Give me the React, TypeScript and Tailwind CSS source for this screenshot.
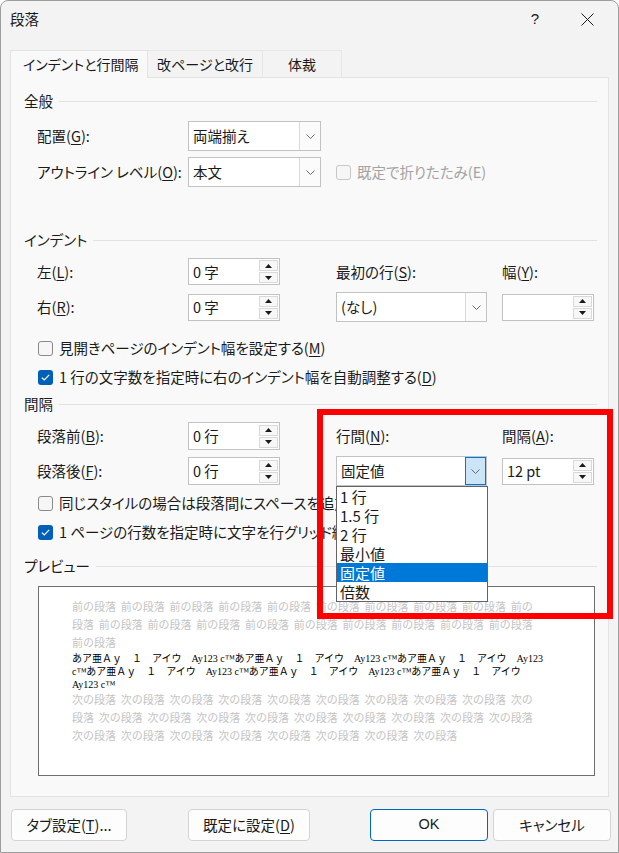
import React from "react";

const jp = "font-['Noto_Sans_CJK_JP',sans-serif] [font-feature-settings:'palt']";

const U = ({ c }: { c: string }) => (
  <span className="underline underline-offset-[2px] decoration-1">{c}</span>
);

const Chevron = () => (
  <svg width="9" height="5" viewBox="0 0 9 5" fill="none">
    <path d="M0.5 0.5 L4.5 4.5 L8.5 0.5" stroke="#6b6b6b" strokeWidth="1" />
  </svg>
);

const Tri = ({ up }: { up?: boolean }) => (
  <svg width="7" height="4" viewBox="0 0 7 4">
    {up ? <path d="M0 4 L3.5 0 L7 4 Z" fill="#1a1a1a" /> : <path d="M0 0 L3.5 4 L7 0 Z" fill="#1a1a1a" />}
  </svg>
);

const Select = ({
  text,
  w,
  hover,
  children,
}: {
  text: string;
  w: string;
  hover?: boolean;
  children?: React.ReactNode;
}) => (
  <div className={`relative flex h-[30px] ${w} border border-[#c2c2c2] bg-white`}>
    <div className="flex flex-1 items-center pl-[4px] text-[14.5px] text-[#1a1a1a]">{text}</div>
    <div
      className={`flex w-[21px] items-center justify-center border-l ${
        hover ? "border border-[#0078d4] bg-[#cce4f7]" : "border-[#dadada] bg-[#fbfbfb]"
      }`}
    >
      <Chevron />
    </div>
    {children}
  </div>
);

const Spin = ({ text, h = "h-[27px]" }: { text: string; h?: string }) => (
  <div className={`flex ${h} w-[92px] items-center border border-[#c2c2c2] bg-white`}>
    <div className="flex-1 pl-[4px] text-[14.5px] text-[#1a1a1a]">{text}</div>
    <div className="mr-[1px] flex flex-col gap-[1px]">
      <div className="flex h-[11px] w-[19px] items-center justify-center border border-[#d9d9d9] bg-[#f7f7f7]">
        <Tri up />
      </div>
      <div className="flex h-[11px] w-[19px] items-center justify-center border border-[#d9d9d9] bg-[#f7f7f7]">
        <Tri />
      </div>
    </div>
  </div>
);

const Check = ({ on, disabled }: { on?: boolean; disabled?: boolean }) =>
  on ? (
    <div className="flex h-[15px] w-[15px] shrink-0 items-center justify-center rounded-[3px] bg-[#005fb8]">
      <svg width="9" height="7" viewBox="0 0 9 7" fill="none">
        <path d="M0.8 3.6 L3.3 6 L8.2 0.9" stroke="white" strokeWidth="1.2" />
      </svg>
    </div>
  ) : (
    <div
      className={`h-[15px] w-[15px] shrink-0 rounded-[3px] border bg-[#f6f6f6] ${
        disabled ? "border-[#c8c8c8]" : "border-[#8a8a8a]"
      }`}
    />
  );

const Heading = ({ text, top }: { text: string; top: string }) => (
  <div className={`${top} ml-[13px] mr-[11px] flex h-[20px] items-center gap-[6px]`}>
    <span className="text-[14.5px] text-[#1a1a1a]">{text}</span>
    <div className="h-px flex-1 bg-[#e1e1e1]" />
  </div>
);

const Label = ({ children, w = "w-[151px]" }: { children: React.ReactNode; w?: string }) => (
  <div className={`${w} text-[14.5px] text-[#1a1a1a]`}>{children}</div>
);

const ghost = "text-[#c4c4c4] text-[11px] leading-[18px] [word-spacing:2px]";
const sample = "whitespace-nowrap text-[10px] leading-[13px] text-black";
const w = (s: string, n: number) => Array(n).fill(s).join(" ");

export default function App() {
  return (
    <div
      className={`relative flex h-[853px] w-[619px] flex-col overflow-hidden rounded-t-[8px] border border-[#9d9d9d] bg-[#f3f3f3] ${jp}`}
    >
      {/* title bar */}
      <div className="flex h-[36px] items-center pl-[9px] pr-[24px] text-[14.5px] text-[#1a1a1a]">
        <span>段落</span>
        <span className="ml-auto mr-[42px] font-['Liberation_Sans',sans-serif] text-[15px]">?</span>
        <svg width="13" height="13" viewBox="0 0 13 13">
          <path d="M0.5 0.5 L12.5 12.5 M12.5 0.5 L0.5 12.5" stroke="#1a1a1a" strokeWidth="1" />
        </svg>
      </div>

      {/* tabs */}
      <div className="mt-[13px] flex h-[27px] items-end pl-[9px] text-[14px] text-[#1a1a1a]">
        <div className="relative z-10 -mb-px flex h-[28px] w-[138px] items-center border border-b-0 border-[#e3e3e3] bg-[#f9f9f9] pl-[12px]">
          インデントと行間隔
        </div>
        <div className="flex h-[27px] w-[115px] items-center justify-center border border-l-0 border-b-0 border-[#e6e6e6]">
          改ページと改行
        </div>
        <div className="flex h-[27px] w-[79px] items-center justify-center border border-l-0 border-b-0 border-[#e6e6e6]">
          体裁
        </div>
      </div>

      {/* panel */}
      <div className="mx-[9px] flex h-[720px] flex-col border border-[#e3e3e3] bg-[#f9f9f9] text-[#1a1a1a]">
        <Heading text="全般" top="mt-[13px]" />

        <div className="mt-[10px] flex items-center pl-[26px]">
          <Label>
            配置(<U c="G" />):
          </Label>
          <Select text="両端揃え" w="w-[133px]" />
        </div>
        <div className="mt-[6px] flex items-center pl-[26px]">
          <Label>
            アウトライン レベル(<U c="O" />):
          </Label>
          <Select text="本文" w="w-[133px]" />
          <div className="ml-[15px]">
            <Check disabled />
          </div>
          <span className="ml-[6px] text-[14.5px] text-[#a3a3a3]">既定で折りたたみ(E)</span>
        </div>

        <Heading text="インデント" top="mt-[43px]" />

        <div className="mt-[8px] flex h-[27px] items-center pl-[26px]">
          <Label>
            左(<U c="L" />):
          </Label>
          <Spin text="0 字" />
          <div className="ml-[56px] w-[166px] text-[14.5px]">
            最初の行(<U c="S" />):
          </div>
          <div className="text-[14.5px]">
            幅(<U c="Y" />):
          </div>
        </div>
        <div className="mt-[7px] flex h-[30px] items-center pl-[26px]">
          <Label>
            右(<U c="R" />):
          </Label>
          <Spin text="0 字" />
          <div className="ml-[56px]">
            <Select text="(なし)" w="w-[151px]" />
          </div>
          <div className="ml-[15px]">
            <Spin text="" />
          </div>
        </div>

        <div className="mt-[16px] flex h-[20px] items-center gap-[6px] pl-[27px] text-[14.5px]">
          <Check />
          <span>
            見開きページのインデント幅を設定する(<U c="M" />)
          </span>
        </div>
        <div className="mt-[9px] flex h-[20px] items-center gap-[6px] pl-[27px] text-[14.5px]">
          <Check on />
          <span>
            1 行の文字数を指定時に右のインデント幅を自動調整する(<U c="D" />)
          </span>
        </div>

        <Heading text="間隔" top="mt-[7px]" />

        <div className="mt-[8px] flex h-[28px] items-center pl-[26px]">
          <Label>
            段落前(<U c="B" />):
          </Label>
          <Spin text="0 行" h="h-[28px]" />
          <div className="ml-[56px] w-[166px] text-[14.5px]">
            行間(<U c="N" />):
          </div>
          <div className="text-[14.5px]">
            間隔(<U c="A" />):
          </div>
        </div>
        <div className="relative z-20 mt-[6px] flex h-[30px] items-center pl-[26px]">
          <Label>
            段落後(<U c="F" />):
          </Label>
          <Spin text="0 行" h="h-[28px]" />
          <div className="ml-[56px]">
            <Select text="固定値" w="w-[151px]" hover>
              {/* open dropdown list */}
              <div className="absolute left-[-1px] top-[29px] w-[152px] border border-[#646464] bg-white text-[15px] leading-[19px] text-[#1a1a1a]">
                <div className="h-[19px] pl-[3px]">1 行</div>
                <div className="h-[19px] pl-[3px]">1.5 行</div>
                <div className="h-[19px] pl-[3px]">2 行</div>
                <div className="h-[19px] pl-[3px]">最小値</div>
                <div className="h-[19px] bg-[#0078d7] pl-[3px] text-white">固定値</div>
                <div className="h-[19px] pl-[3px]">倍数</div>
              </div>
            </Select>
          </div>
          <div className="ml-[15px]">
            <Spin text="12 pt" />
          </div>
        </div>

        <div className="mt-[7px] flex h-[20px] items-center gap-[6px] pl-[27px] text-[14.5px]">
          <Check />
          <span className="whitespace-nowrap">同じスタイルの場合は段落間にスペースを追加しない(C)</span>
        </div>
        <div className="mt-[9px] flex h-[20px] items-center gap-[6px] pl-[27px] text-[14.5px]">
          <Check on />
          <span className="whitespace-nowrap">1 ページの行数を指定時に文字を行グリッド線に合わせる(W)</span>
        </div>

        <Heading text="プレビュー" top="mt-[14px]" />

        <div className="ml-[27px] mt-[10px] h-[190px] w-[557px] border border-[#6e6e6e] bg-white pl-[33px] pt-[11px] font-['Liberation_Serif','Noto_Sans_CJK_JP',serif] [font-feature-settings:normal]">
          <div className={`whitespace-nowrap ${ghost}`}>{w("前の段落", 9)} 前の</div>
          <div className={`whitespace-nowrap ${ghost}`}>段落 {w("前の段落", 9)}</div>
          <div className={`whitespace-nowrap ${ghost}`}>前の段落</div>
          <div className={sample}>
            あア亜Ａｙ　１　アイウ　Ay123 c™あア亜Ａｙ　１　アイウ　Ay123 c™あア亜Ａｙ　１　アイウ　Ay123
          </div>
          <div className={sample}>
            c™あア亜Ａｙ　１　アイウ　Ay123 c™あア亜Ａｙ　１　アイウ　Ay123 c™あア亜Ａｙ　１　アイウ
          </div>
          <div className={sample}>Ay123 c™</div>
          <div className={`whitespace-nowrap ${ghost}`}>{w("次の段落", 9)} 次の</div>
          <div className={`whitespace-nowrap ${ghost}`}>段落 {w("次の段落", 9)}</div>
          <div className={`whitespace-nowrap ${ghost}`}>{w("次の段落", 8)}</div>
        </div>
      </div>

      {/* buttons */}
      <div className="mt-[12px] flex items-center pl-[10px] text-[14.5px] text-[#1a1a1a]">
        <button className="h-[32px] w-[116px] rounded-[4px] border border-[#d4d4d4] bg-[#fdfdfd]">
          タブ設定(<U c="T" />)...
        </button>
        <button className="ml-[61px] h-[32px] w-[122px] rounded-[4px] border border-[#d4d4d4] bg-[#fdfdfd]">
          既定に設定(<U c="D" />)
        </button>
        <button className="ml-[60px] h-[32px] w-[118px] rounded-[4px] border border-[#0067c0] bg-[#fdfdfd] font-['Liberation_Sans',sans-serif]">
          OK
        </button>
        <button className="ml-[5px] h-[32px] w-[118px] rounded-[4px] border border-[#d4d4d4] bg-[#fdfdfd]">
          キャンセル
        </button>
      </div>

      {/* red annotation box */}
      <div className="pointer-events-none absolute left-[316px] top-[408px] z-30 h-[210px] w-[296px] border-[6px] border-[#ff0000]" />
    </div>
  );
}
